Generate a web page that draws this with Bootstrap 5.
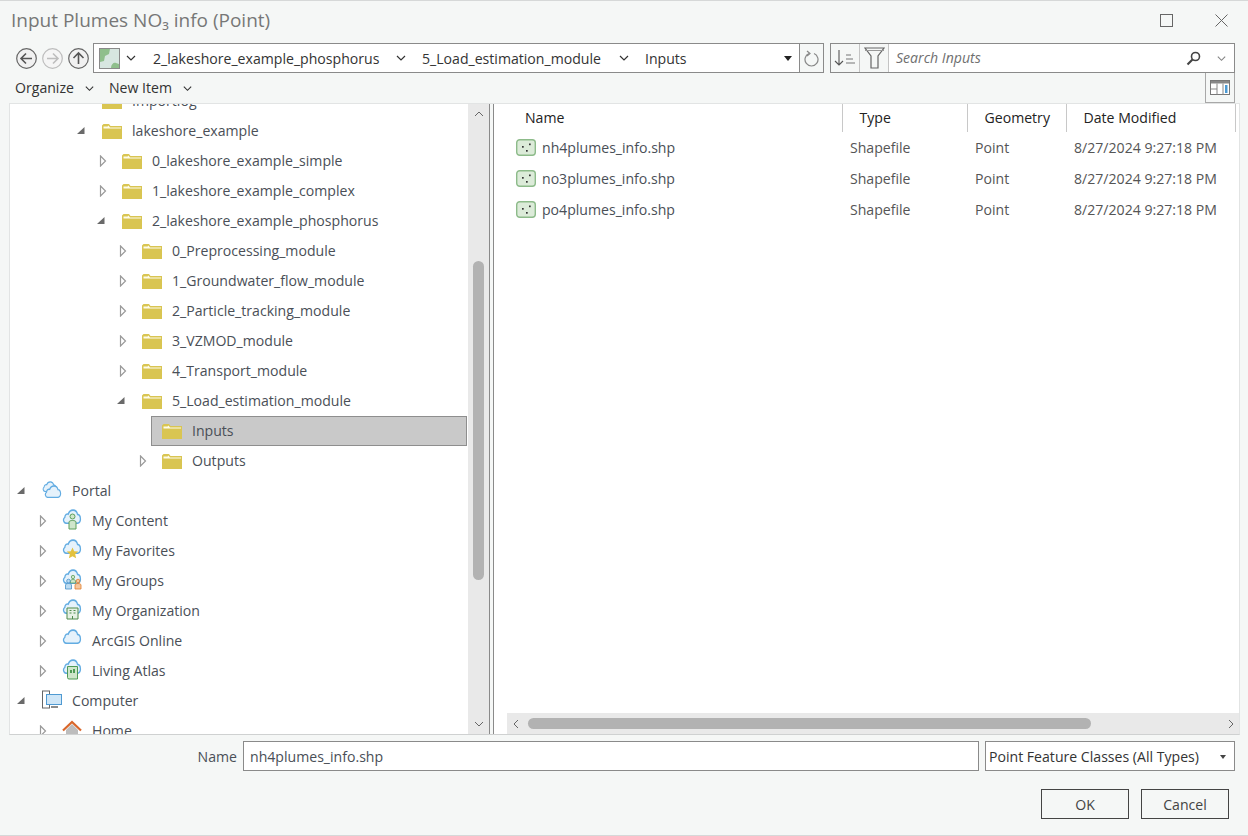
<!DOCTYPE html>
<html>

<head>
    <meta charset="UTF-8">
    <title>Input Plumes NO₃ info (Point)</title>
    <link rel="stylesheet" href="https://cdn.jsdelivr.net/npm/bootstrap@5.3.0/dist/css/bootstrap.min.css">
    <style>
        html, body { height: 100%; overflow: hidden; }

        body {
            background: #f5f7f6;
            color: #4a4f57;
            font-family: "Open Sans", "Liberation Sans", sans-serif;
            font-size: 14.1px;
        }

        .dlg { height: 836px; border-top: 1px solid #d6d8d8; border-bottom: 1px solid #d6d8d8; }

        /* title bar */
        .title-bar { height: 39px; padding-left: 11px; padding-right: 20px; }
        .title-text { font-size: 19px; color: #777; }
        .win-btns { gap: 42px; }

        /* address row */
        .addr-row { height: 30px; margin-top: 3px; padding-left: 16px; padding-right: 13px; }
        .nav-btns { gap: 5px; width: 77px; }
        .crumb-box { width: 707px; height: 30px; background: #fff; border: 1px solid #8a8a8a; padding-left: 5px; color: #333; }
        .crumb-map { width: 21px; }
        .crumb-chev { margin-left: 5px; }
        .crumb-one { width: 254px; margin-left: 16px; padding-top: 1px; white-space: nowrap; }
        .crumb-two { width: 208px; margin-left: 15px; padding-top: 1px; white-space: nowrap; }
        .crumb-last { margin-left: 15px; padding-top: 1px; }
        .crumb-caret { width: 0; height: 0; margin-right: 7px; border-left: 4px solid transparent; border-right: 4px solid transparent; border-top: 5px solid #222; }
        .refresh-box { width: 24px; height: 30px; background: #f5f7f6; border: 1px solid #8a8a8a; border-left: 0; }
        .search-box { width: 405px; height: 30px; margin-left: 6px; background: #fff; border: 1px solid #8a8a8a; }
        .tool-cell { width: 29px; height: 28px; background: #f5f7f6; border-right: 1px solid #c4c4c4; }
        .search-text { font-style: italic; color: #6f6f6f; padding-left: 7px; }
        .search-icons { gap: 15px; padding-right: 7px; }

        /* menu row */
        .menu-row { height: 30px; padding-left: 15px; padding-right: 13px; color: #333; }
        .menu-item { margin-right: 10px; }
        .menu-gap { margin-right: 14px; }
        .view-btn { width: 30px; height: 30px; border: 1px solid #a8a8a8; border-top: 0; }

        /* panes */
        .panes { height: 632px; margin-left: 9px; margin-right: 8px; border: 1px solid #e2e4e4; border-bottom-color: #cfd1d1; background: #fff; }
        .tree-pane { width: 458px; overflow: hidden; }
        .tree-inner { margin-top: -18px; padding-right: 1px; }
        .tree-row { height: 30px; }
        .lvl0 { padding-left: 1px; }
        .lvl1 { padding-left: 21px; }
        .lvl3 { padding-left: 61px; }
        .lvl4 { padding-left: 81px; }
        .lvl5 { padding-left: 101px; }
        .lvl6 { padding-left: 121px; }
        .twisty { width: 20px; height: 28px; flex: none; }
        .tree-item { height: 30px; padding-left: 10px; border: 1px solid transparent; gap: 10px; white-space: nowrap; }
        .tree-item.is-selected { background: #c9c9c9; border-color: #8e8e8e; }
        .tree-ico { flex: none; margin-top: -3px; }
        .tree-dir { flex: none; margin-top: -1px; }

        .vbar { width: 21px; background: #e9e9e9; }
        .vbar-up { height: 20px; }
        .vbar-thumb { width: 11px; height: 319px; margin-top: 137px; margin-left: 5px; border-radius: 6px; background: #b2b2b2; }
        .splitter { width: 5px; background: #f5f7f6; border-left: 1px solid #8a8a8a; border-right: 1px solid #8a8a8a; }

        .list-pane { width: 745px; }
        .list-body { height: 609px; }
        .file-table { table-layout: fixed; width: 741px; margin: 0; font-size: inherit; }
        .file-table th { height: 28px; padding: 0 0 0 17px; font-weight: 400; color: #222; border: 0; border-right: 1px solid #c8c8c8; vertical-align: middle; }
        .file-table th:first-child { padding-left: 31px; }
        .file-table td { height: 31px; padding: 1px 0 0 8px; color: #555; border: 0; vertical-align: middle; white-space: nowrap; }
        .file-table td:first-child { padding-left: 22px; color: #4a4f57; }
        .shp-ico { margin-right: 6px; vertical-align: -3px; }
        .hbar { height: 21px; margin-left: 13px; background: #e9e9e9; padding: 0 4px 0 5px; }
        .hbar-thumb { width: 563px; height: 11px; margin-left: 8px; border-radius: 6px; background: #b2b2b2; }

        /* name row */
        .name-row { margin-top: 6px; height: 30px; padding-right: 13px; }
        .name-label { width: 243px; text-align: right; padding-right: 6px; padding-top: 1px; }
        .name-input.form-control { width: 736px; height: 30px; padding: 0 6px; border: 1px solid #8a8a8a; border-radius: 0; color: #4a4f57; font-size: inherit; box-shadow: none; }
        .type-combo { width: 250px; height: 30px; margin-left: 6px; padding: 1px 8px 0 3px; background: #fff; border: 1px solid #8a8a8a; color: #333; white-space: nowrap; }
        .combo-caret { width: 0; height: 0; border-left: 3px solid transparent; border-right: 3px solid transparent; border-top: 4px solid #444; }

        /* footer */
        .foot-row { margin-top: 18px; padding-right: 19px; gap: 12px; }
        .dlg-btn.btn { width: 88px; height: 30px; padding: 1px 0 0; border: 1px solid #444; border-radius: 0; background: #f5f7f6; color: #444; font-size: inherit; }
    </style>
</head>

<body>
    <!-- shared icons -->
    <svg width="0" height="0" class="d-block position-absolute">
        <symbol id="folder" viewBox="0 0 20 16">
            <path d="M0 2.500 1.500 1H7l1.500 2H20v13H0z" fill="#d9c552"/>
            <path d="M1.500 3.500h4l1-1 1.500 2H19v1H1.500z" fill="#fdfbe9"/>
        </symbol>
        <symbol id="tw-open" viewBox="0 0 12 12"><path d="M9.500 2v7h-7.500z" fill="#6a6a6a"/></symbol>
        <symbol id="tw-closed" viewBox="0 0 12 12"><path d="M5.500 1 10.500 6l-5 5z" fill="#fff" stroke="#9a9a9a" stroke-width="1.200"/></symbol>
        <symbol id="chev" viewBox="0 0 12 12"><path d="M2 4l4 4 4-4" fill="none" stroke="#333" stroke-width="1.200"/></symbol>
        <symbol id="cloud" viewBox="0 1 20 12.600" preserveAspectRatio="none">
            <path d="M4.500 13C1.500 13 .5 9.500 2.800 8 3 5.500 5 4.800 6.300 5.300 7.800.8 14.500.8 15.500 5.500c3.500.2 4.500 7.500-.5 7.500z" fill="#e6f2fb" stroke="#62ace2" stroke-width="1.300"/>
        </symbol>
        <symbol id="shp" viewBox="0 0 20 17">
            <rect x=".7" y=".7" width="18.600" height="15.600" rx="3" fill="#dcebd9" stroke="#8dbb8a" stroke-width="1.400"/>
            <rect x="6" y="7" width="1.700" height="1.700" fill="#333"/>
            <rect x="13" y="4.500" width="1.700" height="1.700" fill="#333"/>
            <rect x="10" y="11" width="1.700" height="1.700" fill="#333"/>
        </symbol>
    </svg>

    <div class="dlg d-flex flex-column">
        <div class="title-bar d-flex align-items-center justify-content-between">
            <span class="title-text">Input Plumes NO₃ info (Point)</span>
            <div class="win-btns d-flex align-items-center">
                <svg width="13" height="13" viewBox="0 0 13 13"><rect x=".5" y=".5" width="12" height="12" fill="none" stroke="#666"/></svg>
                <svg width="13" height="13" viewBox="0 0 13 13"><path d="M.5.5l12 12M12.500.5l-12 12" stroke="#666" fill="none"/></svg>
            </div>
        </div>

        <div class="addr-row d-flex align-items-center">
            <div class="nav-btns d-flex flex-shrink-0">
                <svg width="21" height="21" viewBox="0 0 21 21"><circle cx="10.500" cy="10.500" r="9.800" fill="#f1f1f1" stroke="#666" stroke-width="1.200"/><path d="M16 10.500H5.500M10 5.500l-5 5 5 5" fill="none" stroke="#555" stroke-width="1.600"/></svg>
                <svg width="21" height="21" viewBox="0 0 21 21"><circle cx="10.500" cy="10.500" r="9.800" fill="#f5f5f5" stroke="#bdbdbd" stroke-width="1.200"/><path d="M5 10.500h10.500M11 5.500l5 5-5 5" fill="none" stroke="#bdbdbd" stroke-width="1.600"/></svg>
                <svg width="21" height="21" viewBox="0 0 21 21"><circle cx="10.500" cy="10.500" r="9.800" fill="#f1f1f1" stroke="#666" stroke-width="1.200"/><path d="M10.500 16V5.500M5.500 10l5-5 5 5" fill="none" stroke="#555" stroke-width="1.600"/></svg>
            </div>
            <div class="crumb-box d-flex align-items-center flex-shrink-0">
                <svg class="crumb-map flex-shrink-0" width="21" height="21" viewBox="0 0 21 21">
                    <rect x=".5" y=".5" width="20" height="20" fill="#d7e6e0" stroke="#8a8a8a"/>
                    <path d="M1 1h10l-1 5-4 2-1 5-4 1z" fill="#8fbf8c"/>
                    <path d="M12 20c0-4 3-6 5-5l3 1v4z" fill="#8fbf8c"/>
                </svg>
                <svg class="crumb-chev flex-shrink-0" width="12" height="12"><use href="#chev"/></svg>
                <span class="crumb-one d-flex justify-content-between align-items-center flex-shrink-0"><span>2_lakeshore_example_phosphorus</span><svg width="12" height="12"><use href="#chev"/></svg></span>
                <span class="crumb-two d-flex justify-content-between align-items-center flex-shrink-0"><span>5_Load_estimation_module</span><svg width="12" height="12"><use href="#chev"/></svg></span>
                <span class="crumb-last flex-grow-1">Inputs</span>
                <span class="crumb-caret"></span>
            </div>
            <div class="refresh-box d-flex align-items-center justify-content-center flex-shrink-0">
                <svg width="16" height="17" viewBox="0 0 16 17"><path d="M5 3.500a6.500 6.500 0 1 0 5 0" fill="none" stroke="#888" stroke-width="1.200"/><path d="M3 1l3 2.500L3 6" fill="none" stroke="#888" stroke-width="1.200"/></svg>
            </div>
            <div class="search-box d-flex align-items-center flex-shrink-0">
                <div class="tool-cell d-flex align-items-center justify-content-center flex-shrink-0">
                    <svg width="22" height="18" viewBox="0 0 22 18"><path d="M5 1v15M1 12l4 4 4-4" fill="none" stroke="#555" stroke-width="1.100"/><path d="M12 6h5M12 10h7M12 14h9" stroke="#777" stroke-width="1.100"/></svg>
                </div>
                <div class="tool-cell d-flex align-items-center justify-content-center flex-shrink-0">
                    <svg width="21" height="22" viewBox="0 0 21 22"><path d="M1 1h19l-6 8v12H7V9z" fill="none" stroke="#666" stroke-width="1.200"/><path d="M1 3.500h19" stroke="#999"/></svg>
                </div>
                <span class="search-text flex-grow-1">Search Inputs</span>
                <div class="search-icons d-flex align-items-center">
                    <svg width="15" height="15" viewBox="0 0 15 15"><circle cx="9.500" cy="5.500" r="4" fill="none" stroke="#444" stroke-width="1.600"/><path d="M6.500 8.500 1.500 13.500" stroke="#444" stroke-width="2.200"/></svg>
                    <svg width="11" height="11"><use href="#chev" opacity=".6"/></svg>
                </div>
            </div>
        </div>

        <div class="menu-row d-flex align-items-center">
            <span class="menu-item">Organize</span>
            <svg class="menu-gap" width="11" height="11"><use href="#chev"/></svg>
            <span class="menu-item">New Item</span>
            <svg width="11" height="11"><use href="#chev"/></svg>
            <div class="view-btn ms-auto d-flex align-items-center justify-content-center">
                <svg width="20" height="15" viewBox="0 0 20 15"><rect x=".5" y=".5" width="19" height="14" fill="#fff" stroke="#777"/><rect x="1" y="1" width="18" height="2.500" fill="#888"/><path d="M7 3.500v11M.5 9h6.500M13 3.500v11" stroke="#888"/><rect x="15" y="5" width="2.500" height="8" fill="#4a9ad4"/></svg>
            </div>
        </div>

        <div class="panes d-flex">
            <div class="tree-pane flex-shrink-0">
                <div class="tree-inner">
                    <div class="tree-row d-flex align-items-center lvl3">
                        <span class="twisty"></span>
                        <div class="tree-item d-flex align-items-center flex-grow-1"><svg class="tree-dir" width="20" height="16"><use href="#folder"/></svg><span>Importlog</span></div>
                    </div>
                    <div class="tree-row d-flex align-items-center lvl3">
                        <span class="twisty d-flex align-items-center justify-content-center"><svg width="12" height="12"><use href="#tw-open"/></svg></span>
                        <div class="tree-item d-flex align-items-center flex-grow-1"><svg class="tree-dir" width="20" height="16"><use href="#folder"/></svg><span>lakeshore_example</span></div>
                    </div>
                    <div class="tree-row d-flex align-items-center lvl4">
                        <span class="twisty d-flex align-items-center justify-content-center"><svg width="12" height="12"><use href="#tw-closed"/></svg></span>
                        <div class="tree-item d-flex align-items-center flex-grow-1"><svg class="tree-dir" width="20" height="16"><use href="#folder"/></svg><span>0_lakeshore_example_simple</span></div>
                    </div>
                    <div class="tree-row d-flex align-items-center lvl4">
                        <span class="twisty d-flex align-items-center justify-content-center"><svg width="12" height="12"><use href="#tw-closed"/></svg></span>
                        <div class="tree-item d-flex align-items-center flex-grow-1"><svg class="tree-dir" width="20" height="16"><use href="#folder"/></svg><span>1_lakeshore_example_complex</span></div>
                    </div>
                    <div class="tree-row d-flex align-items-center lvl4">
                        <span class="twisty d-flex align-items-center justify-content-center"><svg width="12" height="12"><use href="#tw-open"/></svg></span>
                        <div class="tree-item d-flex align-items-center flex-grow-1"><svg class="tree-dir" width="20" height="16"><use href="#folder"/></svg><span>2_lakeshore_example_phosphorus</span></div>
                    </div>
                    <div class="tree-row d-flex align-items-center lvl5">
                        <span class="twisty d-flex align-items-center justify-content-center"><svg width="12" height="12"><use href="#tw-closed"/></svg></span>
                        <div class="tree-item d-flex align-items-center flex-grow-1"><svg class="tree-dir" width="20" height="16"><use href="#folder"/></svg><span>0_Preprocessing_module</span></div>
                    </div>
                    <div class="tree-row d-flex align-items-center lvl5">
                        <span class="twisty d-flex align-items-center justify-content-center"><svg width="12" height="12"><use href="#tw-closed"/></svg></span>
                        <div class="tree-item d-flex align-items-center flex-grow-1"><svg class="tree-dir" width="20" height="16"><use href="#folder"/></svg><span>1_Groundwater_flow_module</span></div>
                    </div>
                    <div class="tree-row d-flex align-items-center lvl5">
                        <span class="twisty d-flex align-items-center justify-content-center"><svg width="12" height="12"><use href="#tw-closed"/></svg></span>
                        <div class="tree-item d-flex align-items-center flex-grow-1"><svg class="tree-dir" width="20" height="16"><use href="#folder"/></svg><span>2_Particle_tracking_module</span></div>
                    </div>
                    <div class="tree-row d-flex align-items-center lvl5">
                        <span class="twisty d-flex align-items-center justify-content-center"><svg width="12" height="12"><use href="#tw-closed"/></svg></span>
                        <div class="tree-item d-flex align-items-center flex-grow-1"><svg class="tree-dir" width="20" height="16"><use href="#folder"/></svg><span>3_VZMOD_module</span></div>
                    </div>
                    <div class="tree-row d-flex align-items-center lvl5">
                        <span class="twisty d-flex align-items-center justify-content-center"><svg width="12" height="12"><use href="#tw-closed"/></svg></span>
                        <div class="tree-item d-flex align-items-center flex-grow-1"><svg class="tree-dir" width="20" height="16"><use href="#folder"/></svg><span>4_Transport_module</span></div>
                    </div>
                    <div class="tree-row d-flex align-items-center lvl5">
                        <span class="twisty d-flex align-items-center justify-content-center"><svg width="12" height="12"><use href="#tw-open"/></svg></span>
                        <div class="tree-item d-flex align-items-center flex-grow-1"><svg class="tree-dir" width="20" height="16"><use href="#folder"/></svg><span>5_Load_estimation_module</span></div>
                    </div>
                    <div class="tree-row d-flex align-items-center lvl6">
                        <span class="twisty"></span>
                        <div class="tree-item is-selected d-flex align-items-center flex-grow-1"><svg class="tree-dir" width="20" height="16"><use href="#folder"/></svg><span>Inputs</span></div>
                    </div>
                    <div class="tree-row d-flex align-items-center lvl6">
                        <span class="twisty d-flex align-items-center justify-content-center"><svg width="12" height="12"><use href="#tw-closed"/></svg></span>
                        <div class="tree-item d-flex align-items-center flex-grow-1"><svg class="tree-dir" width="20" height="16"><use href="#folder"/></svg><span>Outputs</span></div>
                    </div>
                    <div class="tree-row d-flex align-items-center lvl0">
                        <span class="twisty d-flex align-items-center justify-content-center"><svg width="12" height="12"><use href="#tw-open"/></svg></span>
                        <div class="tree-item d-flex align-items-center flex-grow-1">
                            <svg class="tree-ico" width="20" height="18" viewBox="0 0 20 18"><use href="#cloud" x="0" y="0" width="15" height="11"/><use href="#cloud" x="2" y="4" width="18" height="13"/></svg><span>Portal</span></div>
                    </div>
                    <div class="tree-row d-flex align-items-center lvl1">
                        <span class="twisty d-flex align-items-center justify-content-center"><svg width="12" height="12"><use href="#tw-closed"/></svg></span>
                        <div class="tree-item d-flex align-items-center flex-grow-1">
                            <svg class="tree-ico" width="20" height="21" viewBox="0 0 20 21"><use href="#cloud" width="20" height="15"/><circle cx="10.500" cy="7.500" r="2.500" fill="#cfe6cb" stroke="#5d9e5a"/><path d="M7 20v-7c0-2 7-2 7 0v7z" fill="#cfe6cb" stroke="#5d9e5a"/></svg><span>My Content</span></div>
                    </div>
                    <div class="tree-row d-flex align-items-center lvl1">
                        <span class="twisty d-flex align-items-center justify-content-center"><svg width="12" height="12"><use href="#tw-closed"/></svg></span>
                        <div class="tree-item d-flex align-items-center flex-grow-1">
                            <svg class="tree-ico" width="20" height="21" viewBox="0 0 20 21"><use href="#cloud" width="20" height="15"/><path d="M10.500 8.500l1.700 3.700 4 .4-3 2.700.9 4-3.600-2.100-3.600 2.100.9-4-3-2.700 4-.4z" fill="#e3c23f"/></svg><span>My Favorites</span></div>
                    </div>
                    <div class="tree-row d-flex align-items-center lvl1">
                        <span class="twisty d-flex align-items-center justify-content-center"><svg width="12" height="12"><use href="#tw-closed"/></svg></span>
                        <div class="tree-item d-flex align-items-center flex-grow-1">
                            <svg class="tree-ico" width="20" height="21" viewBox="0 0 20 21"><use href="#cloud" width="20" height="15"/><circle cx="11" cy="8" r="1.700" fill="#cfe6cb" stroke="#5d9e5a" stroke-width=".8"/><path d="M8.500 14v-2c0-2 5-2 5 0v2z" fill="#cfe6cb" stroke="#5d9e5a" stroke-width=".8"/><circle cx="6.500" cy="12" r="1.800" fill="#bcdcf2" stroke="#4a90c8" stroke-width=".8"/><path d="M3.500 20v-4c0-2 6-2 6 0v4z" fill="#bcdcf2" stroke="#4a90c8" stroke-width=".8"/><circle cx="16" cy="12" r="1.800" fill="#f6c79d" stroke="#e07f2e" stroke-width=".8"/><path d="M13 20v-4c0-2 6-2 6 0v4z" fill="#f6c79d" stroke="#e07f2e" stroke-width=".8"/></svg><span>My Groups</span></div>
                    </div>
                    <div class="tree-row d-flex align-items-center lvl1">
                        <span class="twisty d-flex align-items-center justify-content-center"><svg width="12" height="12"><use href="#tw-closed"/></svg></span>
                        <div class="tree-item d-flex align-items-center flex-grow-1">
                            <svg class="tree-ico" width="20" height="21" viewBox="0 0 20 21"><use href="#cloud" width="20" height="15"/><path d="M5 20V9h11v11z" fill="#e6f0e4" stroke="#4e8a4b"/><path d="M7.500 11.500h2M11.500 11.500h2M7.500 14h2M11.500 14h2M10.500 20v-3" stroke="#4e8a4b"/></svg><span>My Organization</span></div>
                    </div>
                    <div class="tree-row d-flex align-items-center lvl1">
                        <span class="twisty d-flex align-items-center justify-content-center"><svg width="12" height="12"><use href="#tw-closed"/></svg></span>
                        <div class="tree-item d-flex align-items-center flex-grow-1">
                            <svg class="tree-ico" width="20" height="21" viewBox="0 0 20 21"><use href="#cloud" width="20" height="15"/></svg><span>ArcGIS Online</span></div>
                    </div>
                    <div class="tree-row d-flex align-items-center lvl1">
                        <span class="twisty d-flex align-items-center justify-content-center"><svg width="12" height="12"><use href="#tw-closed"/></svg></span>
                        <div class="tree-item d-flex align-items-center flex-grow-1">
                            <svg class="tree-ico" width="20" height="21" viewBox="0 0 20 21"><use href="#cloud" width="20" height="15"/><path d="M5.500 18.500V7.500h10V20H7a1.500 1.500 0 0 1-1.500-1.500" fill="#cfe6cb" stroke="#4e9a55"/><path d="M8 11h2v3H8zM11 10h2v4h-2z" fill="#4e9a55"/></svg><span>Living Atlas</span></div>
                    </div>
                    <div class="tree-row d-flex align-items-center lvl0">
                        <span class="twisty d-flex align-items-center justify-content-center"><svg width="12" height="12"><use href="#tw-open"/></svg></span>
                        <div class="tree-item d-flex align-items-center flex-grow-1">
                            <svg class="tree-ico" width="20" height="20" viewBox="0 0 20 20"><rect x=".5" y="1" width="7" height="17" fill="#fff" stroke="#666"/><rect x="4.500" y="4.500" width="15" height="10" fill="#cfe6f7" stroke="#4f9ad2"/><path d="M9 17h7" stroke="#666" stroke-width="1.500"/></svg><span>Computer</span></div>
                    </div>
                    <div class="tree-row d-flex align-items-center lvl1">
                        <span class="twisty d-flex align-items-center justify-content-center"><svg width="12" height="12"><use href="#tw-closed"/></svg></span>
                        <div class="tree-item d-flex align-items-center flex-grow-1">
                            <svg class="tree-ico" width="20" height="20" viewBox="0 0 20 20"><path d="M4 10v9h12v-9l-6-6z" fill="#bdbdbd"/><path d="M1 10.500 10 2l9 8.500" fill="none" stroke="#d9662a" stroke-width="2.200"/></svg><span>Home</span></div>
                    </div>
                </div>
            </div>

            <div class="vbar flex-shrink-0 d-flex flex-column">
                <div class="vbar-up d-flex align-items-center justify-content-center"><svg width="10" height="8" viewBox="0 0 10 8"><path d="M1 6l4-4 4 4" fill="none" stroke="#666"/></svg></div>
                <div class="vbar-thumb"></div>
                <div class="vbar-up mt-auto d-flex align-items-center justify-content-center"><svg width="10" height="8" viewBox="0 0 10 8"><path d="M1 2l4 4 4-4" fill="none" stroke="#666"/></svg></div>
            </div>
            <div class="splitter flex-shrink-0"></div>

            <div class="list-pane flex-shrink-0 d-flex flex-column">
                <div class="list-body">
                    <table class="table file-table">
                        <colgroup><col style="width:348px"><col style="width:125px"><col style="width:99px"><col style="width:169px"></colgroup>
                        <thead>
                            <tr><th>Name</th><th>Type</th><th>Geometry</th><th>Date Modified</th></tr>
                        </thead>
                        <tbody>
                            <tr>
                                <td><svg class="shp-ico" width="20" height="17"><use href="#shp"/></svg>nh4plumes_info.shp</td>
                                <td>Shapefile</td><td>Point</td><td>8/27/2024 9:27:18 PM</td>
                            </tr>
                            <tr>
                                <td><svg class="shp-ico" width="20" height="17"><use href="#shp"/></svg>no3plumes_info.shp</td>
                                <td>Shapefile</td><td>Point</td><td>8/27/2024 9:27:18 PM</td>
                            </tr>
                            <tr>
                                <td><svg class="shp-ico" width="20" height="17"><use href="#shp"/></svg>po4plumes_info.shp</td>
                                <td>Shapefile</td><td>Point</td><td>8/27/2024 9:27:18 PM</td>
                            </tr>
                        </tbody>
                    </table>
                </div>
                <div class="hbar d-flex align-items-center">
                    <svg width="8" height="10" viewBox="0 0 8 10"><path d="M6 1 2 5l4 4" fill="none" stroke="#666"/></svg>
                    <div class="hbar-thumb"></div>
                    <svg class="ms-auto" width="8" height="10" viewBox="0 0 8 10"><path d="M2 1l4 4-4 4" fill="none" stroke="#666"/></svg>
                </div>
            </div>
        </div>

        <div class="name-row d-flex align-items-center">
            <span class="name-label flex-shrink-0">Name</span>
            <input class="form-control name-input flex-shrink-0" type="text" value="nh4plumes_info.shp">
            <div class="type-combo d-flex align-items-center justify-content-between flex-shrink-0">
                <span>Point Feature Classes (All Types)</span><span class="combo-caret"></span>
            </div>
        </div>

        <div class="foot-row d-flex justify-content-end">
            <button class="btn dlg-btn" type="button">OK</button>
            <button class="btn dlg-btn" type="button">Cancel</button>
        </div>
    </div>

    <script src="https://cdn.jsdelivr.net/npm/bootstrap@5.3.0/dist/js/bootstrap.bundle.min.js"></script>
</body>

</html>
